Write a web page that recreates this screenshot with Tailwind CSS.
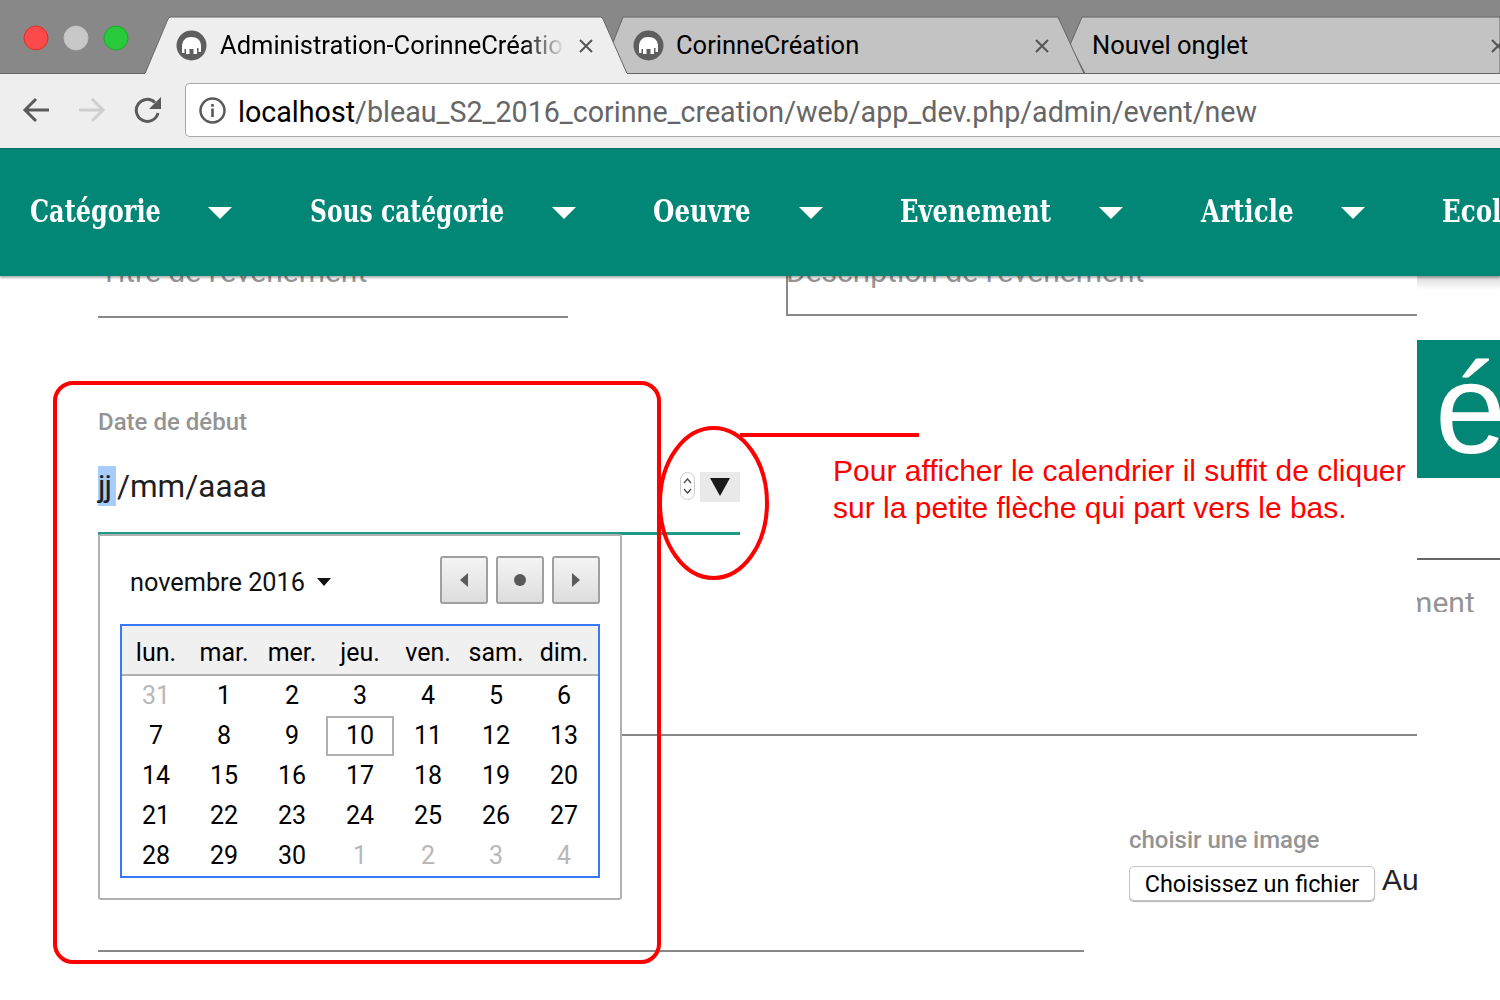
<!DOCTYPE html>
<html lang="fr"><head><meta charset="utf-8"><title>Administration-CorinneCréation</title>
<script src="https://cdn.jsdelivr.net/npm/@tailwindcss/browser@4"></script></head>
<body class="bg-white font-['Roboto',sans-serif] text-black">
<div class="relative w-[1500px] h-[1000px] overflow-hidden">
  <!-- tab strip -->
  <header class="relative h-[74px] bg-[#888888]">
    <svg class="absolute inset-0" width="1500" height="74" viewBox="0 0 1500 74">
      <polygon points="1070,45 1082,17 1500,17 1500,73.5 1085,73.5" fill="#c3c3c3" stroke="#666"/>
      <polygon points="612,45 623,17 1058,17 1084,73.5 620,73.5" fill="#c3c3c3" stroke="#666"/>
      <line x1="0" y1="73.5" x2="1500" y2="73.5" stroke="#666"/>
      <polygon points="145,73.5 168,19 170,17 601,17 603,19 627,73.5" fill="#eeeeee" stroke="#666" stroke-width="1"/>
      <line x1="145" y1="73.5" x2="627" y2="73.5" stroke="#eeeeee" stroke-width="1"/>
      <g><circle cx="36" cy="38" r="12" fill="#fc4a4a" stroke="#d9302f"/><circle cx="76" cy="38" r="12" fill="#c8c8c8" stroke="#c0c0c0"/><circle cx="116" cy="38" r="12" fill="#28c93b" stroke="#1ea92f"/></g>
    </svg>
    <div class="relative flex h-full items-center pt-[17px] pl-[176px] text-[25.5px] text-black">
      <svg class="shrink-0" width="31" height="31" viewBox="0 0 31 31"><circle cx="15.500" cy="15.500" r="15" fill="#5e5e5e"/><path d="M6 17C6 10 10 7 15 7C21 7 25 10 25 16V22H22.500V18H21V24H17.500V19H13.500V24H10V19H8.500V23H6Z" fill="#fff"/></svg>
      <span class="ml-[13px] w-[345px] shrink-0 overflow-hidden whitespace-nowrap [mask-image:linear-gradient(to_right,black_88%,transparent)]">Administration-CorinneCréation</span>
      <svg class="ml-[13px] shrink-0" width="16" height="16" viewBox="0 0 16 16"><path d="M2 2l12 12M14 2L2 14" stroke="#555" stroke-width="2"/></svg>
      <svg class="ml-[39px] shrink-0" width="31" height="31" viewBox="0 0 31 31"><circle cx="15.500" cy="15.500" r="15" fill="#5e5e5e"/><path d="M6 17C6 10 10 7 15 7C21 7 25 10 25 16V22H22.500V18H21V24H17.500V19H13.500V24H10V19H8.500V23H6Z" fill="#fff"/></svg>
      <span class="ml-[12px] w-[358px] shrink-0 whitespace-nowrap">CorinneCréation</span>
      <svg class="shrink-0" width="16" height="16" viewBox="0 0 16 16"><path d="M2 2l12 12M14 2L2 14" stroke="#555" stroke-width="2"/></svg>
      <span class="ml-[42px] w-[398px] shrink-0 whitespace-nowrap">Nouvel onglet</span>
      <svg class="shrink-0" width="16" height="16" viewBox="0 0 16 16"><path d="M2 2l12 12M14 2L2 14" stroke="#555" stroke-width="2"/></svg>
    </div>
  </header>
  <!-- toolbar -->
  <div class="flex h-[74px] items-center bg-[#eeeeee] pb-[2px] pl-[22px]">
    <svg class="shrink-0" width="28" height="28" viewBox="0 0 28 28" fill="none" stroke="#5a5a5a" stroke-width="3"><path d="M27 14H3M14 3L3 14l11 11"/></svg>
    <svg class="ml-[28px] shrink-0" width="28" height="28" viewBox="0 0 28 28" fill="none" stroke="#cfcfcf" stroke-width="3"><path d="M1 14h24M14 3l11 11-11 11"/></svg>
    <svg class="ml-[28px] shrink-0" width="28" height="28" viewBox="0 0 28 28" fill="none"><path d="M24 17a11 11 0 1 1-3-10.500" stroke="#5a5a5a" stroke-width="3"/><path d="M27 1v12H15z" fill="#5a5a5a"/></svg>
    <div class="ml-[23px] flex h-[54px] flex-1 items-center rounded-l-[5px] border border-r-0 border-[#aaaaaa] bg-white pl-[13px]">
      <svg class="shrink-0" width="27" height="27" viewBox="0 0 27 27" fill="none"><circle cx="13.500" cy="13.500" r="12" stroke="#5a5a5a" stroke-width="2.500"/><rect x="12.200" y="11.500" width="2.600" height="8.500" fill="#5a5a5a"/><rect x="12.200" y="7" width="2.600" height="2.800" fill="#5a5a5a"/></svg>
      <span class="ml-[12px] mt-[4px] whitespace-nowrap text-[28.65px] text-[#666666]"><span class="text-black">localhost</span>/bleau_S2_2016_corinne_creation/web/app_dev.php/admin/event/new</span>
    </div>
  </div>
  <!-- nav -->
  <nav class="relative z-10 flex h-[128px] bg-[#028676] border-t border-[#0a6d61] pt-[43px] pl-[30px] shadow-[0_2px_2px_rgba(0,0,0,0.3)] font-['DejaVu_Serif_Condensed','DejaVu_Serif',serif] font-bold text-[31px] leading-[38px] text-white whitespace-nowrap">
    <span class="w-[178px] shrink-0"><span class="inline-block origin-left scale-x-[0.86]">Catégorie</span></span>
    <svg class="mt-[15px] mr-[78px] shrink-0" width="24" height="12"><polygon points="0,0 24,0 12,12" fill="#fff"/></svg>
    <span class="w-[242px] shrink-0"><span class="inline-block origin-left scale-x-[0.84]">Sous catégorie</span></span>
    <svg class="mt-[15px] mr-[77px] shrink-0" width="24" height="12"><polygon points="0,0 24,0 12,12" fill="#fff"/></svg>
    <span class="w-[146px] shrink-0"><span class="inline-block origin-left scale-x-[0.88]">Oeuvre</span></span>
    <svg class="mt-[15px] mr-[77px] shrink-0" width="24" height="12"><polygon points="0,0 24,0 12,12" fill="#fff"/></svg>
    <span class="w-[199px] shrink-0"><span class="inline-block origin-left scale-x-[0.87]">Evenement</span></span>
    <svg class="mt-[15px] mr-[78px] shrink-0" width="24" height="12"><polygon points="0,0 24,0 12,12" fill="#fff"/></svg>
    <span class="w-[140px] shrink-0"><span class="inline-block origin-left scale-x-[0.88]">Article</span></span>
    <svg class="mt-[15px] mr-[77px] shrink-0" width="24" height="12"><polygon points="0,0 24,0 12,12" fill="#fff"/></svg>
    <span class="shrink-0"><span class="inline-block origin-left scale-x-[0.88]">Ecole</span></span>
  </nav>
  <!-- form -->
  <main class="relative text-[24px] font-medium text-[#949494]">
    <div class="absolute left-[1417px] top-0 h-[14px] w-[83px] bg-gradient-to-b from-[#d8d8d8] to-white"></div>
    <div class="flex h-[43px] pl-[98px] font-normal">
      <div class="w-[470px] h-[42px] border-b-2 border-[#888888] overflow-hidden"><div class="mt-[-19px] leading-[30px] whitespace-nowrap pl-[2px] text-[30px]">Titre de l'évènement</div></div>
      <div class="ml-[218px] w-[631px] h-[40px] border-b-2 border-l-2 border-[#888888] overflow-hidden"><div class="mt-[-19px] ml-[-2px] leading-[30px] whitespace-nowrap text-[30px]">Description de l'évènement</div></div>
    </div>
    <div class="flex h-[415px] pl-[98px]">
      <div class="w-[642px] h-[216px] flex flex-col pt-[86px]">
        <div class="leading-[34px] h-[62px]">Date de début</div>
        <div class="flex h-[40px] text-[31.5px] font-normal leading-[42px] text-[#1f1f1f]"><span class="bg-[#a8cdfb] w-[18px] tracking-[-1px]">jj</span><span class="ml-[1px]">/mm/aaaa</span></div>
        <div class="relative h-[0px]">
          <div class="absolute left-[582px] top-[-34px] w-[15px] h-[28px] rounded-full border border-[#cccccc] bg-white flex items-center justify-center">
            <svg width="11" height="22" viewBox="0 0 11 22" fill="none" stroke="#444" stroke-width="1.200"><path d="M2 8l3.500-4L9 8M2 14l3.500 4L9 14"/></svg>
          </div>
          <div class="absolute left-[602px] top-[-34px] w-[40px] h-[30px] bg-[#e9e9e9] flex items-center justify-center">
            <svg width="20" height="18"><polygon points="0,0 20,0 10,18" fill="#1a1a1a"/></svg>
          </div>
        </div>
        <div class="mt-[26px] h-[3px] bg-[#1f9a85]"></div>
      </div>
      <div class="ml-auto w-[83px] pt-[21px]">
        <div class="h-[138px] bg-[#028676] overflow-hidden text-white font-['Liberation_Sans',sans-serif] font-normal text-[128px] leading-[138px] pl-[18px]">é</div>
        <div class="mt-[80px] h-[2px] bg-[#666666]"></div>
        <div class="mt-[26px] h-[26px] overflow-hidden leading-[34px] text-[30px] font-normal whitespace-nowrap ml-[-101px] [clip-path:inset(0_0_0_101px)]">l'évènement</div>
      </div>
    </div>
    <div class="ml-[98px] w-[1319px] h-[2px] bg-[#888888]"></div>
    <div class="flex h-[218px] pl-[98px]">
      <div class="w-[986px] h-[216px] border-b-2 border-[#888888]"></div>
      <div class="ml-[45px] w-[288px] overflow-hidden pt-[87px]">
        <div class="leading-[34px] h-[43px]">choisir une image</div>
        <div class="flex items-start">
          <button class="w-[246px] h-[35px] shrink-0 rounded-[5px] border border-[#c4c4c4] bg-white shadow-[0_1px_1px_rgba(0,0,0,0.3)] text-[23.4px] font-normal leading-[35px] text-black whitespace-nowrap">Choisissez un fichier</button>
          <span class="ml-[7px] mt-[-1px] text-[30px] font-normal leading-[30px] text-[#222222] font-['Liberation_Sans',sans-serif] whitespace-nowrap">Aucun</span>
        </div>
      </div>
    </div>

    <!-- calendar popup -->
    <section class="absolute left-[98px] top-[258px] w-[524px] h-[366px] rounded-[3px] border-2 border-[#b0b0b0] bg-white px-[20px] pt-[20px] font-normal text-black">
      <div class="flex h-[48px] items-center">
        <span class="ml-[10px] mt-[6px] text-[25.3px] text-[#111111]">novembre 2016</span>
        <svg class="ml-[12px] mt-[4px]" width="14" height="8"><polygon points="0,0 14,0 7,8" fill="#111"/></svg>
        <div class="ml-auto flex gap-[8px]">
          <button class="flex h-[48px] w-[48px] items-center justify-center rounded-[3px] border-2 border-[#a0a0a0] bg-gradient-to-b from-[#f4f4f4] to-[#dedede]"><svg width="8" height="14"><polygon points="8,0 8,14 0,7" fill="#5a5a5a"/></svg></button>
          <button class="flex h-[48px] w-[48px] items-center justify-center rounded-[3px] border-2 border-[#a0a0a0] bg-gradient-to-b from-[#f4f4f4] to-[#dedede]"><svg width="12" height="12"><circle cx="6" cy="6" r="6" fill="#5a5a5a"/></svg></button>
          <button class="flex h-[48px] w-[48px] items-center justify-center rounded-[3px] border-2 border-[#a0a0a0] bg-gradient-to-b from-[#f4f4f4] to-[#dedede]"><svg width="8" height="14"><polygon points="0,0 8,7 0,14" fill="#5a5a5a"/></svg></button>
        </div>
      </div>
      <div class="mt-[20px] w-[480px] h-[254px] border-2 border-[#3b78f5] text-[25px]">
        <div class="grid h-[50px] grid-cols-7 items-center border-b-2 border-[#b0b0b0] bg-[#f0f0f0] pt-[5px] text-center"><span>lun.</span><span>mar.</span><span>mer.</span><span>jeu.</span><span>ven.</span><span>sam.</span><span>dim.</span></div>
        <div class="grid grid-cols-7 auto-rows-[40px] items-center text-center">
          <span class="text-[#b8b8b8]">31</span><span>1</span><span>2</span><span>3</span><span>4</span><span>5</span><span>6</span>
          <span>7</span><span>8</span><span>9</span><span class="flex h-[40px] items-center justify-center border-2 border-[#b0b0b0]">10</span><span>11</span><span>12</span><span>13</span>
          <span>14</span><span>15</span><span>16</span><span>17</span><span>18</span><span>19</span><span>20</span>
          <span>21</span><span>22</span><span>23</span><span>24</span><span>25</span><span>26</span><span>27</span>
          <span>28</span><span>29</span><span>30</span><span class="text-[#b8b8b8]">1</span><span class="text-[#b8b8b8]">2</span><span class="text-[#b8b8b8]">3</span><span class="text-[#b8b8b8]">4</span>
        </div>
      </div>
    </section>

    <!-- red annotations -->
    <div class="absolute left-[53px] top-[105px] w-[608px] h-[583px] rounded-[20px] border-4 border-[#ff0000]"></div>
    <svg class="absolute left-[655px] top-[146px]" width="270" height="160" fill="none" stroke="#ff0000" stroke-width="4"><ellipse cx="58.500" cy="81" rx="53.500" ry="75"/><line x1="85" y1="13" x2="264" y2="13"/></svg>
    <p class="absolute left-[833px] top-[176px] font-['Liberation_Sans',sans-serif] font-normal text-[30px] leading-[37px] text-[#ff0000] whitespace-nowrap">Pour afficher le calendrier il suffit de cliquer<br>sur la petite flèche qui part vers le bas.</p>
  </main>
</div>
</body></html>
